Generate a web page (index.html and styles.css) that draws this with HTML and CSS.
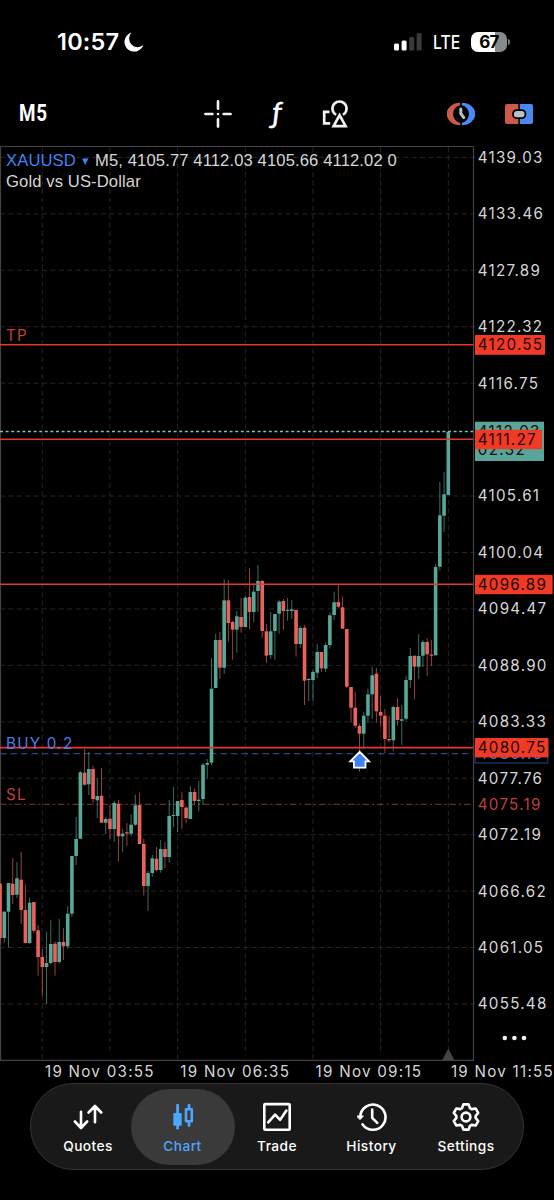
FILE: index.html
```
<!DOCTYPE html>
<html lang="en">
<head>
  <meta charset="UTF-8" />
  <meta name="viewport" content="width=device-width, initial-scale=1.0"/>
  <title>XAUUSD M5</title>
  <link rel="stylesheet" href="styles.css">
</head>
<body>
  <!-- STATUS BAR -->
  <div class="status">
    <span class="clock">10:57</span>
    <svg class="moon" width="20" height="20" viewBox="0 0 20 20"><path d="M7.5 .6A9.7 9.7 0 1 0 19.4 13 8.6 8.6 0 0 1 7.5 .6z" fill="#fff"/></svg>
    <svg class="signal" width="28" height="18" viewBox="0 0 28 18">
      <rect x="0" y="10.5" width="5" height="7" rx="1.5" fill="#fff"/>
      <rect x="7.6" y="7.5" width="5" height="10" rx="1.5" fill="#fff"/>
      <rect x="15.2" y="4" width="5" height="13.5" rx="1.5" fill="#3a3a3a"/>
      <rect x="22.6" y="0" width="5" height="17.5" rx="1.5" fill="#3a3a3a"/>
    </svg>
    <span class="lte">LTE</span>
    <div class="battery"><span>67</span></div>
    <i class="battery-tip"></i>
  </div>

  <!-- TOOLBAR -->
  <div class="toolbar">
    <span class="period">M5</span>
    <svg class="cross" width="28" height="28" viewBox="0 0 28 28" stroke="#f2f2f2" stroke-width="2.6" stroke-linecap="round">
      <path d="M1.4 14h7M19.6 14h7M14 1.4v7.4M14 19.2v7.4"/><path d="M14 14h.01" stroke-width="2.6"/>
    </svg>
    <span class="func">ƒ</span>
    <svg class="shapes" width="28" height="28" viewBox="0 0 28 28" fill="none" stroke="#f2f2f2" stroke-width="2.7">
      <path d="M7.5 11.8H2.2v11.6h6"/>
      <circle cx="17.5" cy="8.6" r="7.1"/>
      <path d="M17.6 14.8l-6.3 11h12.6z" stroke="#000" stroke-width="6"/>
      <path d="M17.6 15.2l-6 10.9h12z"/>
    </svg>
    <svg class="ring" width="28" height="24" viewBox="0 0 28 24">
      <path d="M13.2 .7A13.5 11.3 0 0 0 13.2 23.3v-2.5a9 9 0 0 1 0-17.6z" fill="#cc5a4b"/>
      <path d="M14.8 .7A13.5 11.3 0 0 1 14.8 23.3v-2.5a9 9 0 0 0 0-17.6z" fill="#4b88f2"/>
      <path d="M13.8 7v4.6l3 4" fill="none" stroke="#b9c0c6" stroke-width="3" stroke-linejoin="round" stroke-linecap="round"/>
    </svg>
    <svg class="order" width="28" height="20" viewBox="0 0 28 20">
      <path d="M2 0h11.3v20H2a2 2 0 0 1-2-2V2a2 2 0 0 1 2-2z" fill="#cc5a4b"/>
      <path d="M14.8 0H26a2 2 0 0 1 2 2v16a2 2 0 0 1-2 2H14.8z" fill="#4b88f2"/>
      <rect x="8" y="6.2" width="12.4" height="8" rx="3.6" fill="#b9c0c6" stroke="#000" stroke-width="1.8"/>
    </svg>
  </div>

  <!-- CHART -->
  <svg id="chart" width="554" height="938" viewBox="0 146 554 938"></svg>

  <!-- TAB BAR -->
  <nav class="tabs">
    <a class="tab">
      <svg viewBox="0 0 30 30"><path d="M8 9.8v16M1.9 19.5L8 26l6.1-6.5M22 4.5v15.8M15.6 10.5L22 4l6.2 6.5"/></svg>
      <span>Quotes</span>
    </a>
    <a class="tab active">
      <svg viewBox="0 0 30 30">
        <g fill="currentColor" stroke="none"><rect x="5.3" y="11" width="8.4" height="12.8" rx=".8"/><rect x="8.2" y="2" width="2.8" height="25.4" rx=".8"/><rect x="19.6" y="2" width="2.8" height="5" rx=".8"/><rect x="19.6" y="20" width="2.8" height="4.7" rx=".8"/></g>
        <rect x="18" y="7.2" width="5.8" height="12" />
      </svg>
      <span>Chart</span>
    </a>
    <a class="tab">
      <svg viewBox="0 0 30 30"><rect x="2.3" y="2.1" width="25.4" height="25.6" rx="1"/><path d="M6.2 20.3l6.9-7.6 5 5.2 6.3-9.4"/></svg>
      <span>Trade</span>
    </a>
    <a class="tab">
      <svg viewBox="0 0 30 30"><path d="M3.3 15A12.6 12.6 0 1 1 5.6 22.4M15.2 7.6v8.2l5 5"/><path d="M0 14h6.4l-3.2 3.4z" fill="currentColor" stroke-width="1"/></svg>
      <span>History</span>
    </a>
    <a class="tab">
      <svg viewBox="-15 -15 30 30"><path d="M-4-8.8L-2.6-12.6H2.6L4-8.8 5.6-7.9 9.6-8.55 12.2-4.05 9.6-.95V.95L12.2 4.05 9.6 8.55 5.6 7.9 4 8.8 2.6 12.6H-2.6L-4 8.8-5.6 7.9-9.6 8.55-12.2 4.05-9.6 .95V-.95L-12.2-4.05-9.6-8.55-5.6-7.9z"/><circle r="4.4"/></svg>
      <span>Settings</span>
    </a>
  </nav>

  <script src="chart.js"></script>
</body>
</html>
```
FILE: styles.css
```
body {
  margin: 0;
  width: 554px;
  height: 1200px;
  overflow: hidden;
  background: #000;
  color: #fff;
  font-family: Inter, "Liberation Sans", sans-serif;
}

/* status bar */
.status {
  display: flex;
  align-items: center;
  height: 83px;
  padding-left: 57px;
  box-sizing: border-box;
}

.clock {
  width: 67px;
  font-size: 23.5px;
  font-weight: 600;
  letter-spacing: 0.2px;
}

.moon {
  margin-right: 250px;
}

.signal {
  margin-right: 11px;
}

.lte {
  width: 38px;
  font-size: 18.5px;
  font-weight: 500;
  transform: scaleX(0.85);
  transform-origin: left;
}

.battery {
  width: 36px;
  height: 20px;
  border-radius: 7px;
  background: linear-gradient(90deg, #fff 67%, #8a8a8a 67%);
  color: #000;
  font-size: 17px;
  font-weight: 700;
  line-height: 20px;
  text-align: center;
  letter-spacing: -0.8px;
}

.battery-tip {
  width: 2px;
  height: 6px;
  margin-left: 1px;
  border-radius: 0 2px 2px 0;
  background: #777;
}

/* toolbar */
.toolbar {
  display: flex;
  align-items: center;
  height: 63px;
  padding: 0 0 2px 19px;
  box-sizing: border-box;
}

.period {
  width: 185px;
  font-family: Roboto, sans-serif;
  font-size: 23px;
  font-weight: 700;
  letter-spacing: 0.8px;
  transform: scaleX(0.82);
  transform-origin: left;
}

.func {
  width: 22px;
  margin: 0 34px 3px 34px;
  font-family: Lato, sans-serif;
  font-size: 29px;
  font-style: italic;
  font-weight: 400;
  line-height: 30px;
  text-align: center;
  -webkit-text-stroke: 0.5px #fff;
}

.ring {
  margin: 0 30px 0 97px;
}

/* chart */
#chart {
  display: block;
}

.grid {
  stroke: #252527;
  stroke-width: 1;
  stroke-dasharray: 5 3.4;
}

.frame {
  fill: none;
  stroke: #424244;
  stroke-width: 1.2;
}

.up {
  fill: #57a898;
  stroke: #57a898;
}

.down {
  fill: #e9625c;
  stroke: #e9625c;
}

.up rect, .down rect {
  stroke: none;
}

.up line, .down line {
  stroke-width: 1;
  stroke-opacity: 0.65;
}

.level {
  stroke: #e5382c;
  stroke-width: 1.6;
}

.bid {
  stroke: #7fc0b4;
  stroke-width: 1.5;
  stroke-dasharray: 3 2.6;
}

.entry {
  stroke: #2c4384;
  stroke-width: 1.3;
  stroke-dasharray: 6.5 4;
}

.stop {
  stroke: #6e2a26;
  stroke-width: 1.2;
  stroke-dasharray: 6.5 3 2 3;
}

text {
  font-family: Inter, sans-serif;
  font-size: 15.2px;
  letter-spacing: 1.25px;
  fill: #d6d6d6;
}

.dark {
  fill: #1c0705;
}

.red {
  fill: #bd4038;
}

.blue {
  fill: #4a7fe8;
}

.info {
  font-family: "Liberation Sans", Arial, sans-serif;
  font-size: 16.6px;
  letter-spacing: 0.12px;
}

.symbol {
  fill: #3d84f5;
}

/* tab bar */
.tabs {
  display: flex;
  justify-content: center;
  width: 494px;
  height: 87px;
  margin: -1px auto 0;
  padding: 5px 4px;
  box-sizing: border-box;
  border: 1px solid #333;
  border-radius: 43px;
  background: #191919;
}

.tab {
  display: flex;
  flex-direction: column;
  align-items: center;
  flex: none;
  width: 104px;
  height: 76px;
  margin: 0 -4.75px;
  padding-top: 13px;
  box-sizing: border-box;
  border-radius: 38px;
  font-size: 13.7px;
  font-weight: 500;
  letter-spacing: 0.45px;
}

.tab svg {
  width: 30px;
  height: 30px;
  margin-bottom: 6px;
  fill: none;
  stroke: currentColor;
  stroke-width: 2.6;
  stroke-linejoin: round;
  stroke-linecap: round;
}

.active {
  background: #3a3a3a;
  color: #4ea6fa;
}
```
FILE: chart.js
```
// body top, body bottom, high, low, 1 = up / 0 = down
const candles = [
  [883.7,938,883,944,0],[911.7,938,911,942.7,1],[883,911.7,883,947.5,1],[883.7,895,858,904,0],
  [878.3,894.7,862,898,1],[879.7,910,851.7,924,0],[910,943,884.7,943,0],[902.7,943,897.7,944,1],
  [902,930.7,902,933,0],[930.3,957,925,975.7,0],[957,967,949,995.7,0],[963,967,931.7,1004,1],
  [944,963,920,964.7,1],[943.7,962,941,975.7,0],[942,962,918.7,963.7,1],[942,946.3,928,960,0],
  [913.7,946.3,906,949,1],[856,913.7,856,917,1],[839,856,817,865,1],[772.3,838.7,770.7,839,1],
  [772.7,784.7,749,785.7,0],[769,784.3,752,795,1],[769,799,765.7,802.7,0],[796,800.3,778,818,1],
  [795.7,822.7,768,823,0],[819,822.7,817,834,1],[818.7,829,805,839,0],[803,829,801,842,1],
  [803.7,836.3,800,861.3,0],[833.7,836.3,829,852,1],[832.3,833.5,823,846,0],[824.7,833.7,814,836,1],
  [805.3,824.7,794.7,826,1],[805,844,792.7,844,0],[844,886,838.7,895.7,0],[873,886,871,911,1],
  [858.3,873,855,876.7,1],[858.7,870,847,871,0],[849,870,840,872.7,1],[849,857,842,868,0],
  [816,857,800,862.7,1],[815,816,786.7,827,1],[801,816,801,832,1],[800,807,792,828.7,0],
  [807.7,818,806,823,0],[792,819,786,819,1],[792,801,788.7,805,0],[799.7,801,780.7,811,1],
  [764.7,799,763,804.7,1],[763,764.7,759,778.7,1],[688.7,762.7,658,765,1],[640,688,633.7,688,1],
  [640,667.7,632,679,0],[600.3,667.7,579,674,1],[600.3,623,580,641.7,0],[622,629.7,620.7,659.7,0],
  [616.3,629.7,611,652.7,1],[617,627,598,632.7,0],[597.7,627,596,627,1],[597,612,568,629,0],
  [591.7,612,583,622,1],[581,591,565,612,1],[581,631,580,638,0],[631.3,655.7,624,663,0],
  [631.3,655,612,659,1],[614,631,614,659.7,1],[601.7,613.7,600,633.7,1],[601,611,599,630,0],
  [610,611,598,620.7,1],[609.3,611,600,619,1],[610,644,610,656.7,0],[628,644,626,647.7,1],
  [627.7,680.7,625,705,0],[679,680,678,701,1],[672,680,670,701,1],[652,672.7,644,678,1],
  [652,668.3,652,672,0],[645,668.7,642,672,1],[615.3,645,612.7,648.7,1],[602.3,615,591.7,620,1],
  [602,606.7,584,608,0],[607.3,628.7,597,629,0],[629,686.7,629,688,0],[687,707.7,687,722.7,0],
  [707.7,725.7,692,727.7,0],[726,733.7,724,771.7,0],[715.7,733.7,711.7,749,1],[694.3,715.7,688.7,723,1],
  [675.3,694.3,667,719,1],[673.7,711.3,668,722.7,0],[712,715.7,696,726.7,0],[715.7,739,709,753,0],
  [739,740.3,715.7,742,0],[707,740.3,705.7,751,1],[707,720,698,725.7,0],[719.3,720.7,705,745,1],
  [680,718.7,675.7,720.7,1],[656,680,648,688,1],[655.7,666.7,655.7,699,0],[656,666.7,634,679,1],
  [642,655.7,640,667,1],[642,654.3,638,676,0],[654.5,655.7,640,666,0],[567,655.3,564,655.3,1],
  [515.3,566.7,482,570.7,1],[494.3,515.7,472,532,1],[431.7,495,431.7,495,1]
];

const prices = ['4139.03', '4133.46', '4127.89', '4122.32', '4116.75', '', '4105.61', '4100.04',
  '4094.47', '4088.90', '4083.33', '4077.76', '4072.19', '4066.62', '4061.05', '4055.48'];
const times = ['19 Nov 03:55', '19 Nov 06:35', '19 Nov 09:15', '19 Nov 11:55'];

let out = '';
const line = (x1, y1, x2, y2, cls) => `<line x1="${x1}" y1="${y1}" x2="${x2}" y2="${y2}" class="${cls}"/>`;
const text = (x, y, s, cls) => `<text x="${x}" y="${y}" class="${cls || ''}">${s}</text>`;
const box = (y, w, h, fill, stroke) => `<rect x="475" y="${y}" width="${w}" height="${h}" fill="${fill}" stroke="${stroke || 'none'}"/>`;

// grid and price scale
prices.forEach((p, i) => {
  const y = 157.4 + i * 56.44;
  out += line(0, y, 477, y, 'grid') + text(477.8, y + 5.4, p);
});
for (let i = 0; i < 7; i++) {
  const x = 42.3 + i * 67.67;
  out += line(x, 147, x, i % 2 ? 1055 : 1063, 'grid');
}
times.forEach((t, i) => out += text(45 + i * 135.3, 1077, t));
out += '<path d="M.5 1060.3V146.5H473.5V1060.3z" class="frame"/>';
out += '<path d="M442.3 1060l6-11.5 6 11.5z" fill="#444446"/>';

// order lines under the candles
out += line(0, 753.6, 473, 753.6, 'entry') + line(0, 804.4, 473, 804.4, 'stop');

candles.forEach((c, i) => {
  const x = 448.3 - 4.229 * (106 - i);
  out += `<g class="${c[4] ? 'up' : 'down'}"><line x1="${x}" y1="${c[2]}" x2="${x}" y2="${c[3]}"/>` +
    `<rect x="${x - 1.8}" y="${c[0]}" width="3.6" height="${c[1] - c[0]}"/></g>`;
});

out += line(0, 431.4, 473, 431.4, 'bid');
[344.8, 439.2, 584.2, 747.6].forEach(y => out += line(0, y, 473, y, 'level'));

// price tags
out += box(421.7, 69, 39.3, '#57a699') + text(477.8, 436.8, '4112.03', 'dark') + text(477.8, 455, '02:32', 'dark');
out += box(745, 72.8, 18, '#000', '#2c4384') + text(477.8, 759, '4080.16', 'blue');
out += box(335, 70, 19.8, '#f03a26') + text(477.8, 350.2, '4120.55', 'dark');
out += box(429.8, 67, 19.4, '#f03a26') + text(477.8, 445, '4111.27', 'dark');
out += box(574.8, 77.6, 19.4, '#f03a26') + text(477.8, 589.8, '4096.89', 'dark');
out += box(738, 73.4, 19.4, '#f03a26') + text(477.8, 753, '4080.75', 'dark');
out += text(477.8, 809.8, '4075.19', 'red');

// order labels
out += text(6, 340.5, 'TP', 'red') + text(6, 749, 'BUY 0.2', 'blue') + text(6, 799.5, 'SL', 'red');
out += '<path d="M359.7 751.8l9.4 9.6h-3.6v6.2h-11.6v-6.2h-3.6z" fill="#3f82f4" stroke="#fff" stroke-width="1.8"/>';

// header text
out += text(6, 166, 'XAUUSD', 'info symbol');
out += '<path d="M82 158.6h6.4l-3.2 6.4z" fill="#3d84f5"/>';
out += text(95, 166, 'M5, 4105.77 4112.03 4105.66 4112.02 0', 'info');
out += text(6, 187, 'Gold vs US-Dollar', 'info');

// more button
[504.8, 514.4, 524].forEach(x => out += `<circle cx="${x}" cy="1038" r="2.3" fill="#f2f2f2"/>`);

document.getElementById('chart').innerHTML = out;
```
